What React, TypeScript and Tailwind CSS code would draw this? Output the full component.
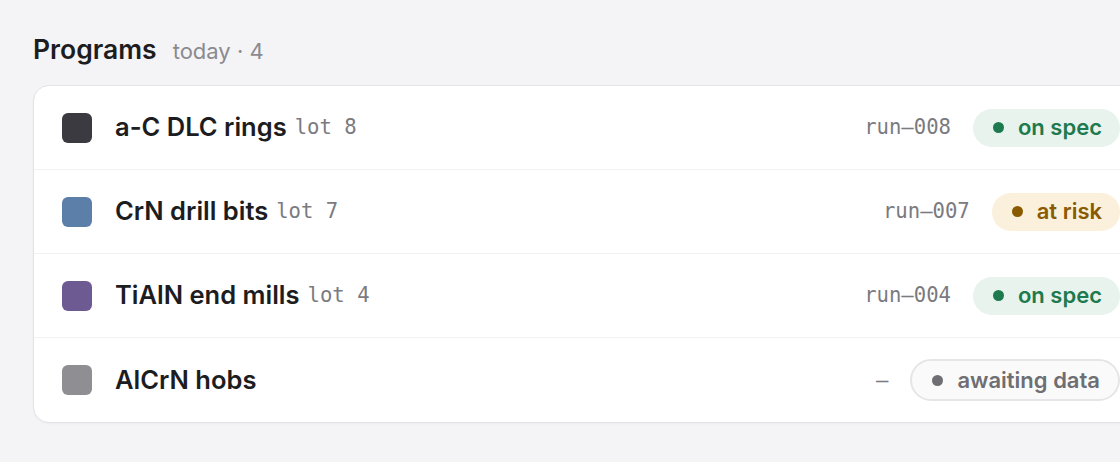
import React from "react";

type Status = "ok" | "risk" | "wait";

const rows: { color: string; name: string; lot?: string; run: string; status: Status }[] = [
  { color: "bg-[#3a3a40]", name: "a-C DLC rings", lot: "lot 8", run: "run–008", status: "ok" },
  { color: "bg-[#5b7fa8]", name: "CrN drill bits", lot: "lot 7", run: "run–007", status: "risk" },
  { color: "bg-[#6e5a92]", name: "TiAlN end mills", lot: "lot 4", run: "run–004", status: "ok" },
  { color: "bg-[#8e8e93]", name: "AlCrN hobs", run: "–", status: "wait" },
];

function Pill({ status }: { status: Status }) {
  if (status === "ok")
    return (
      <span className="flex h-[38px] items-center gap-[14px] rounded-full bg-[#e7f3ec] pl-[20px] pr-[18px] text-[22px] font-semibold text-[#1d7a4e]">
        <span className="h-[11px] w-[11px] rounded-full bg-[#1d7a4e]" />
        on spec
      </span>
    );
  if (status === "risk")
    return (
      <span className="flex h-[38px] items-center gap-[14px] rounded-full bg-[#faf0dc] pl-[20px] pr-[18px] text-[22px] font-semibold text-[#8a5a00]">
        <span className="h-[11px] w-[11px] rounded-full bg-[#8a5a00]" />
        at risk
      </span>
    );
  return (
    <span className="flex h-[42px] items-center gap-[14px] rounded-full border-2 border-[#e6e6e9] bg-[#fafafa] pl-[20px] pr-[18px] text-[22px] font-semibold text-[#6e6e73]">
      <span className="h-[11px] w-[11px] rounded-full bg-[#6e6e73]" />
      awaiting data
    </span>
  );
}

export default function App() {
  return (
    <div
      className="h-[462px] w-[1120px] overflow-hidden bg-[#f4f4f6] pl-[33px] pt-[32px]"
      style={{ fontFamily: "Inter, 'Noto Sans', sans-serif" }}
    >
      <div className="flex items-baseline gap-[16px]">
        <h1 className="text-[26.5px] font-semibold leading-[34px] text-[#1d1d1f]">Programs</h1>
        <span className="text-[22px] text-[#8a8a8f]">today · 4</span>
      </div>
      <div className="mt-[17px] w-[1116px] rounded-[16px] border border-[#e3e3e7] bg-white shadow-[0_1px_2px_rgba(0,0,0,0.03)]">
        {rows.map((r, i) => (
          <div
            key={r.name}
            className={`flex h-[84px] items-center px-[28px] ${i < rows.length - 1 ? "border-b border-[#f2f2f4]" : ""}`}
          >
            <span className={`h-[30px] w-[30px] shrink-0 rounded-[6px] ${r.color}`} />
            <span className="ml-[23px] text-[25.5px] font-semibold text-[#1d1d1f]">{r.name}</span>
            {r.lot && (
              <span
                className="ml-[8px] text-[20.6px] text-[#7a7a7f]"
                style={{ fontFamily: "'DejaVu Sans Mono', monospace" }}
              >
                {r.lot}
              </span>
            )}
            <span className="flex-1" />
            <span
              className="mr-[22px] text-[20.6px] text-[#7a7a7f]"
              style={{ fontFamily: "'DejaVu Sans Mono', monospace" }}
            >
              {r.run}
            </span>
            <Pill status={r.status} />
          </div>
        ))}
      </div>
    </div>
  );
}
